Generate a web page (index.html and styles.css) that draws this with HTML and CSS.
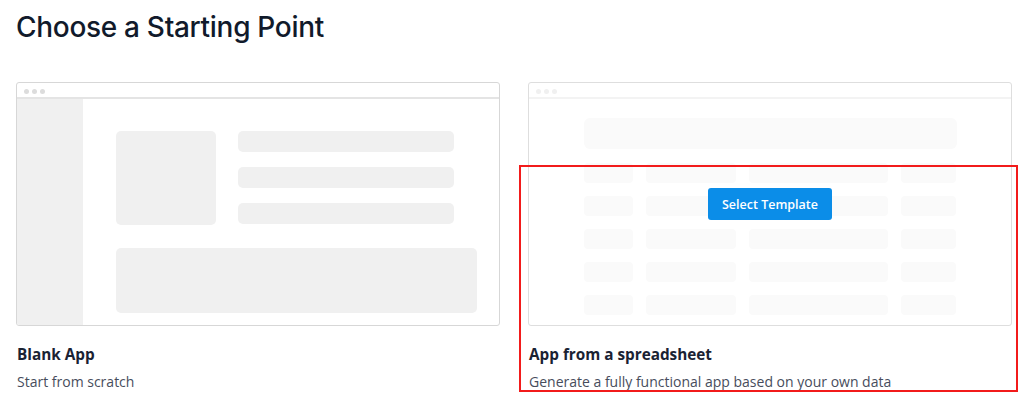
FILE: index.html
```html
<!DOCTYPE html>
<html>
<head>
<meta charset="utf-8">
<link rel="stylesheet" href="styles.css">
</head>
<body>
<main class="page">
  <h1 class="heading">Choose a Starting Point</h1>
  <div class="options">
    <section class="option">
      <div class="window">
        <div class="window-bar"><span class="dot"></span><span class="dot"></span><span class="dot"></span></div>
        <div class="blank-body">
          <div class="blank-side"></div>
          <div class="blank-content">
            <div class="blank-top">
              <div class="ph ph-square"></div>
              <div class="blank-lines">
                <div class="ph ph-line"></div>
                <div class="ph ph-line"></div>
                <div class="ph ph-line"></div>
              </div>
            </div>
            <div class="ph ph-wide"></div>
          </div>
        </div>
      </div>
      <h2 class="option-title">Blank App</h2>
      <p class="option-desc">Start from scratch</p>
    </section>
    <section class="option option-sheet">
      <div class="window window-faint">
        <div class="window-bar"><span class="dot"></span><span class="dot"></span><span class="dot"></span></div>
        <div class="sheet-body">
          <div class="fph sheet-head"></div>
          <div class="sheet-grid">
            <div class="fph"></div><div class="fph"></div><div class="fph"></div><div class="fph"></div>
            <div class="fph"></div><div class="fph"></div><div class="fph"></div><div class="fph"></div>
            <div class="fph"></div><div class="fph"></div><div class="fph"></div><div class="fph"></div>
            <div class="fph"></div><div class="fph"></div><div class="fph"></div><div class="fph"></div>
            <div class="fph"></div><div class="fph"></div><div class="fph"></div><div class="fph"></div>
          </div>
        </div>
        <button class="select-btn">Select Template</button>
      </div>
      <h2 class="option-title">App from a spreadsheet</h2>
      <p class="option-desc">Generate a fully functional app based on your own data</p>
      <div class="highlight"></div>
    </section>
  </div>
</main>
</body>
</html>
```

FILE: styles.css
```css
* { box-sizing: border-box; }
html, body { margin: 0; padding: 0; background: #ffffff; }
body { font-family: "Open Sans", "Liberation Sans", sans-serif; color: #1a2233; }

.page { padding: 10px 12px 0 16px; }

.heading {
  margin: 0;
  font-family: Inter, "Noto Sans", sans-serif;
  font-weight: 500;
  font-size: 28px;
  line-height: 34px;
  color: #111a2b;
  letter-spacing: -0.3px;
}

.options {
  display: grid;
  grid-template-columns: 484px 484px;
  column-gap: 28px;
  margin-top: 38px;
}

.option { position: relative; }

.window {
  position: relative;
  height: 244px;
  border: 1px solid #d7d7d7;
  border-radius: 3px;
  overflow: hidden;
  display: flex;
  flex-direction: column;
  background: #fff;
}
.window-faint { border-color: #dedede; }

.window-bar {
  height: 16px;
  flex: none;
  border-bottom: 2px solid #e4e4e4;
  display: flex;
  align-items: center;
  gap: 3px;
  padding-left: 7px;
  padding-top: 2px;
}
.dot { width: 5px; height: 5px; border-radius: 50%; background: #dcdcdc; }
.window-faint .window-bar { border-bottom-color: #f3f3f3; }
.window-faint .dot { background: #f0f0f0; }

.blank-body { flex: 1; display: flex; }
.blank-side { width: 66px; background: #f0f0f0; }
.blank-content {
  flex: 1;
  padding: 32px 22px 13px 33px;
  display: flex;
  flex-direction: column;
  gap: 23px;
}
.blank-top { display: flex; gap: 22px; }
.blank-lines { display: flex; flex-direction: column; gap: 15px; }
.ph { background: #f0f0f0; border-radius: 5px; }
.ph-square { width: 100px; height: 94px; }
.ph-line { width: 216px; height: 21px; }
.ph-wide { height: 65px; }

.sheet-body { flex: 1; padding: 19px 54px 0 55px; }
.fph { background: #fafafa; border-radius: 4px; height: 20px; }
.sheet-head { height: 31px; border-radius: 6px; background: #fafafa; }
.sheet-grid {
  margin-top: 14px;
  display: grid;
  grid-template-columns: 49px 90px 139px 55px;
  column-gap: 13px;
  row-gap: 13px;
}

.select-btn {
  position: absolute;
  left: 50%;
  top: 105px;
  transform: translateX(-50%);
  width: 124px;
  height: 32px;
  border: 0;
  border-radius: 3px;
  background: #0b8de8;
  color: #fff;
  font-family: "Open Sans", "Liberation Sans", sans-serif;
  font-weight: 600;
  font-size: 12.5px;
  padding: 0;
  cursor: pointer;
}

.option-title {
  margin: 17px 0 0 1px;
  font-size: 15.3px;
  line-height: 22px;
  font-weight: 700;
  color: #1a2233;
}
.option-desc {
  margin: 7px 0 0 1px;
  font-size: 14px;
  line-height: 20px;
  color: #474d5c;
}

.highlight {
  position: absolute;
  left: -9px;
  top: 83px;
  width: 499px;
  height: 227px;
  border: 2px solid #f21b1b;
  pointer-events: none;
}
```
